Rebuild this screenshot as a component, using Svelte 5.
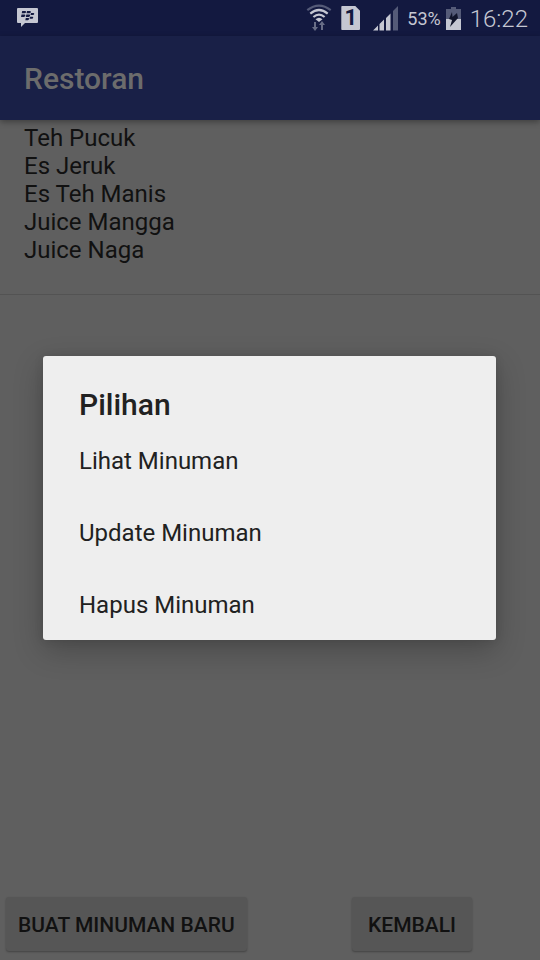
<script>
  const drinks = ['Teh Pucuk', 'Es Jeruk', 'Es Teh Manis', 'Juice Mangga', 'Juice Naga'];
  const options = ['Lihat Minuman', 'Update Minuman', 'Hapus Minuman'];
</script>

<div class="screen">
  <div class="status">
    <svg width="22" height="20" viewBox="0 0 22 20" aria-hidden="true">
      <path fill="#c5c7d2" d="M1 0h19q1 0 1 1v13q0 1-1 1H8l-4 4v-4H1q-1 0-1-1V1q0-1 1-1z" />
      <g fill="#131940">
        <path d="M5.2 3h3q1 .1.8 1.2T7.6 5.3H4.7zM10 3h3q1 .1.8 1.2t-1.4 1.1H9.5zM4.5 6.6h3q1 .1.8 1.2T6.9 8.9H4zM9.3 6.6h3q1 .1.8 1.2t-1.4 1.1H8.8zM14 5h2.4q1 .1.8 1.1T16 7.1h-2.5zM13 8.7h2.4q1 .1.8 1.1t-1.2 1h-2.5zM8.8 10h2.5q1 .1.8 1.1t-1.3 1.1H8.3z" />
      </g>
    </svg>
    <div class="indicators">
      <svg width="26" height="28" viewBox="0 0 26 28" aria-hidden="true">
        <g fill="none" stroke="#c5c7d2" stroke-width="2.2">
          <path stroke="#555b78" d="M1.3 6.2Q13-3 24.7 6.2" />
          <path d="M4.3 9.600Q13 2.400 21.700 9.600" />
          <path d="M7.400 13Q13 8.200 18.600 13" />
        </g>
        <path fill="#c5c7d2" d="M9.500 15.200Q13 12.200 16.500 15.200L13 18z" />
        <path fill="#686d86" d="M8 18h2v5h2l-3 4-3-4h2zM15 26v-5h-2l3-4 3 4h-2v5z" />
      </svg>
      <span class="sim">1</span>
      <svg class="signal" width="25" height="26" viewBox="0 0 25 26" aria-hidden="true">
        <path fill="#c5c7d2" d="M0 25.500l5-5v5zM6.500 19l4.500-4.500v11H6.500zM13 13l4.500-4.500v17H13z" />
        <path fill="#555b78" d="M20 6l5-5v24.500h-5z" />
      </svg>
      <span class="percent">53%</span>
      <svg class="battery" width="15" height="23" viewBox="0 0 15 23" aria-hidden="true">
        <path fill="#555b78" d="M5 0h5v2h5v10H0V2h5z" />
        <path fill="#c5c7d2" d="M0 12h15v11H0z" />
        <path fill="#11152b" d="M6 5l.5 5L11 6l1 5-8 9 2-7-3-1z" />
      </svg>
      <span class="clock">16:22</span>
    </div>
  </div>

  <header><h1>Restoran</h1></header>

  <main>
    <ul class="drinks">
      {#each drinks as drink}
        <li>{drink}</li>
      {/each}
    </ul>
  </main>

  <footer>
    <button>BUAT MINUMAN BARU</button>
    <button>KEMBALI</button>
  </footer>

  <div class="overlay">
    <div class="dialog" role="dialog" aria-modal="true" aria-labelledby="dialog-title">
      <h2 id="dialog-title">Pilihan</h2>
      {#each options as option}
        <button class="option">{option}</button>
      {/each}
    </div>
  </div>
</div>

<style>
  :global(body) {
    margin: 0;
    background: #5f5f5f;
  }
  .screen {
    position: relative;
    display: flex;
    flex-direction: column;
    min-height: 100vh;
    background: #5f5f5f;
    color: #111;
    font-family: Roboto, sans-serif;
  }
  svg {
    display: block;
    flex: none;
  }
  .status {
    display: flex;
    justify-content: space-between;
    align-items: center;
    box-sizing: border-box;
    height: 36px;
    padding: 0 12px 0 17px;
    background: #131940;
    color: #c5c7d2;
  }
  .indicators {
    display: flex;
    align-items: center;
  }
  .sim {
    width: 19px;
    margin-left: 9px;
    border-radius: 1px;
    background: #c5c7d2;
    clip-path: polygon(0 0, 14px 0, 100% 5px, 100% 100%, 0 100%);
    color: #131940;
    font-size: 22px;
    font-weight: 700;
    line-height: 24px;
    text-align: center;
  }
  .signal {
    margin-left: 13px;
  }
  .percent {
    margin-left: 9px;
    padding-top: 2px;
    font-size: 18px;
    line-height: 36px;
  }
  .battery {
    margin-left: 5px;
  }
  .clock {
    margin-left: 9px;
    padding-top: 2px;
    font-size: 24px;
    font-weight: 300;
    line-height: 36px;
  }
  header {
    position: relative;
    padding: 0 24px;
    background: #192047;
    box-shadow: 0 2px 6px rgba(0, 0, 0, 0.35);
  }
  h1 {
    margin: 0;
    padding-top: 2px;
    color: #6c6c6c;
    font-size: 30px;
    font-weight: 500;
    line-height: 82px;
  }
  main {
    flex: 1;
  }
  .drinks {
    margin: 0;
    padding: 4px 24px 30px;
    border-bottom: 1px solid #535353;
    list-style: none;
    font-size: 24px;
    line-height: 28px;
  }
  footer {
    display: flex;
    justify-content: space-between;
    padding: 0 68px 9px 6px;
  }
  button {
    border: 0;
    color: inherit;
    font-family: inherit;
  }
  footer button {
    min-width: 120px;
    height: 54px;
    padding: 2px 12px 0;
    border-radius: 3px;
    background: #565656;
    box-shadow: 0 1px 2px rgba(0, 0, 0, 0.3);
    font-size: 21px;
    font-weight: 500;
  }
  .overlay {
    position: absolute;
    inset: 36px 0 0;
    display: flex;
    align-items: center;
    padding: 0 44px 0 43px;
  }
  .dialog {
    flex: 1;
    border-radius: 3px;
    background: #eee;
    color: #212121;
    box-shadow: 0 10px 30px rgba(0, 0, 0, 0.24), 0 0 10px rgba(0, 0, 0, 0.1);
  }
  h2 {
    margin: 0;
    padding: 31px 36px 1px;
    font-size: 30px;
    font-weight: 500;
    line-height: 36px;
  }
  .option {
    display: block;
    width: 100%;
    height: 72px;
    padding: 2px 36px 0;
    background: none;
    font-size: 24px;
    text-align: left;
  }
</style>
